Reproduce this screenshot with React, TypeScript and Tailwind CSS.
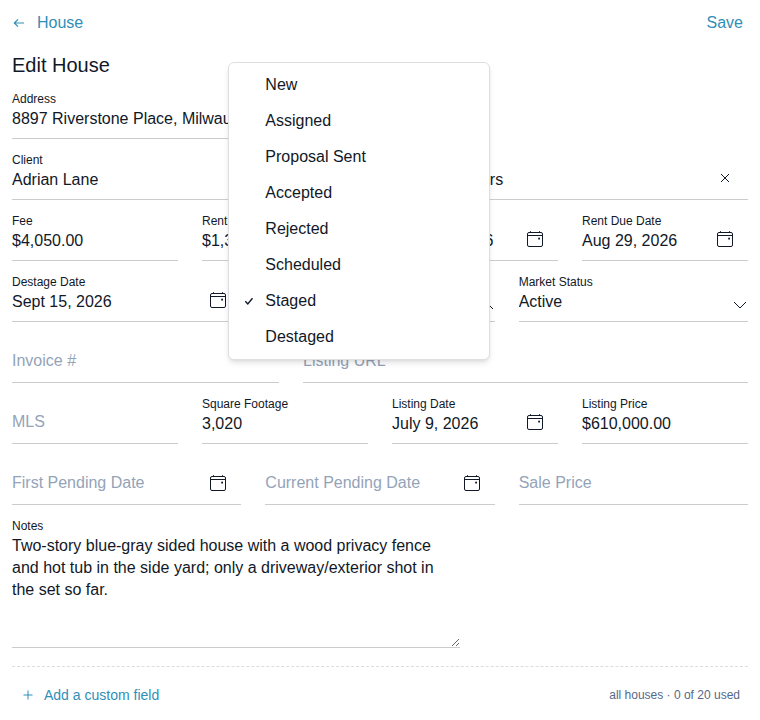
import { useState, type ReactNode } from "react";
import clsx from "clsx";

const STATUSES = [
  "New",
  "Assigned",
  "Proposal Sent",
  "Accepted",
  "Rejected",
  "Scheduled",
  "Staged",
  "Destaged",
];

const CalendarIcon = () => (
  <svg width="18" height="18" viewBox="0 0 18 18" fill="none" stroke="currentColor" aria-hidden="true">
    <rect x="1.5" y="2.5" width="15" height="14" rx="1.5" />
    <path d="M1.5 5.5h15M4.5 1.2v1.3M13.5 1.2v1.3" />
    <rect x="12.2" y="7.7" width="1.8" height="1.8" fill="currentColor" stroke="none" />
  </svg>
);

const ClearIcon = () => (
  <svg width="18" height="18" viewBox="0 0 18 18" fill="none" stroke="currentColor" aria-hidden="true">
    <path d="M5 5l8 8M13 5l-8 8" />
  </svg>
);

const ChevronIcon = ({ className }: { className?: string }) => (
  <svg
    width="14"
    height="8"
    viewBox="0 0 14 8"
    fill="none"
    stroke="currentColor"
    className={className}
    aria-hidden="true"
  >
    <path d="M1 1l6 6 6-6" />
  </svg>
);

const CheckIcon = () => (
  <svg width="10" height="10" viewBox="0 0 10 10" fill="none" stroke="currentColor" strokeWidth="1.4" aria-hidden="true">
    <path d="M1.3 5.3L3.8 8l4.7-5.8" />
  </svg>
);

interface FieldProps {
  id: string;
  label: string;
  value?: string;
  action?: { label: string; icon: ReactNode };
  className?: string;
}

const Field = ({ id, label, value, action, className }: FieldProps) => (
  <div className={clsx("relative h-[49px] min-w-0 border-b border-[#cccccc]", className)}>
    {value && (
      <label htmlFor={id} className="block text-xs leading-[18px]">
        {label}
      </label>
    )}
    <input
      id={id}
      type="text"
      defaultValue={value}
      placeholder={value ? undefined : label}
      aria-label={value ? undefined : label}
      className={clsx(
        "block w-full bg-transparent outline-none placeholder:text-[#94a3b8]",
        value ? "h-[22px]" : "h-12 pt-1.5",
        action && "pr-10",
      )}
    />
    {action && (
      <button type="button" aria-label={action.label} className="absolute right-3.5 bottom-3">
        {action.icon}
      </button>
    )}
  </div>
);

const DateField = (props: Omit<FieldProps, "action">) => (
  <Field {...props} action={{ label: `Choose ${props.label}`, icon: <CalendarIcon /> }} />
);

const StatusField = () => {
  const [status, setStatus] = useState("Staged");
  const [open, setOpen] = useState(true);

  return (
    <div className="relative h-[49px] min-w-0 border-b border-[#cccccc]">
      <label htmlFor="status" className="block text-xs leading-[18px]">
        Status
      </label>
      <button
        id="status"
        type="button"
        aria-haspopup="listbox"
        aria-expanded={open}
        onClick={() => setOpen(!open)}
        className="flex h-[22px] w-full items-center justify-between pr-px"
      >
        {status}
        <ChevronIcon className={clsx("mt-2", open && "rotate-180")} />
      </button>
      {open && (
        <div
          role="listbox"
          aria-label="Status"
          className="absolute -bottom-[39px] -left-[37px] z-10 w-[262px] rounded-md border border-[#dedfe2] bg-white p-1 shadow-md"
        >
          {STATUSES.map((name) => (
            <button
              key={name}
              type="button"
              role="option"
              aria-selected={name === status}
              onClick={() => {
                setStatus(name);
                setOpen(false);
              }}
              className="flex h-9 w-full items-center rounded-sm text-left hover:bg-slate-100"
            >
              <span className="flex w-8 justify-center">{name === status && <CheckIcon />}</span>
              {name}
            </button>
          ))}
        </div>
      )}
    </div>
  );
};

export default function App() {
  return (
    <main className="min-h-screen bg-white px-3 pt-3 font-['Liberation_Sans',Arial,sans-serif] text-base text-[#111827]">
      <header className="flex h-[22px] items-center justify-between text-[#2f8fb8]">
        <a href="#house" className="flex items-center gap-3">
          <svg width="13" height="10" viewBox="0 0 13 10" fill="none" stroke="currentColor" strokeWidth="1.2" aria-hidden="true">
            <path d="M12 5H2.5M6 1.3L2.3 5 6 8.7" />
          </svg>
          House
        </a>
        <button type="button" className="mr-[5px]">
          Save
        </button>
      </header>

      <h1 className="mt-4 text-xl leading-[30px]">Edit House</h1>

      <form className="mt-2.5 flex flex-col gap-3">
        <Field id="address" label="Address" value="8897 Riverstone Place, Milwaukee, WI" className="w-full max-w-md" />

        <div className="grid grid-cols-2 gap-6">
          <Field id="client" label="Client" value="Adrian Lane" />
          <Field
            id="agency"
            label="Agency"
            value="Rivera Partners"
            action={{ label: "Clear agency", icon: <ClearIcon /> }}
          />
        </div>

        <div className="grid grid-cols-4 gap-6">
          <Field id="fee" label="Fee" value="$4,050.00" />
          <Field id="rent" label="Rent" value="$1,350.00" />
          <DateField id="stage-date" label="Stage Date" value="June 29, 2026" />
          <DateField id="rent-due" label="Rent Due Date" value="Aug 29, 2026" />
        </div>

        <div className="grid grid-cols-3 gap-6">
          <DateField id="destage-date" label="Destage Date" value="Sept 15, 2026" />
          <StatusField />
          <div className="relative h-[49px] min-w-0 border-b border-[#cccccc]">
            <label htmlFor="market-status" className="block text-xs leading-[18px]">
              Market Status
            </label>
            <select
              id="market-status"
              defaultValue="Active"
              className="block h-[22px] w-full appearance-none bg-transparent leading-[22px] outline-none"
            >
              <option>Active</option>
              <option>Pending</option>
              <option>Sold</option>
            </select>
            <ChevronIcon className="pointer-events-none absolute right-px bottom-3" />
          </div>
        </div>

        <div className="grid grid-cols-[3fr_5fr] gap-6">
          <Field id="invoice" label="Invoice #" />
          <Field id="listing-url" label="Listing URL" />
        </div>

        <div className="grid grid-cols-4 gap-6">
          <Field id="mls" label="MLS" />
          <Field id="sqft" label="Square Footage" value="3,020" />
          <DateField id="listing-date" label="Listing Date" value="July 9, 2026" />
          <Field id="listing-price" label="Listing Price" value="$610,000.00" />
        </div>

        <div className="grid grid-cols-3 gap-6">
          <DateField id="first-pending" label="First Pending Date" />
          <DateField id="current-pending" label="Current Pending Date" />
          <Field id="sale-price" label="Sale Price" />
        </div>

        <div className="w-full max-w-md">
          <label htmlFor="notes" className="block text-xs leading-[18px]">
            Notes
          </label>
          <textarea
            id="notes"
            rows={5}
            defaultValue="Two-story blue-gray sided house with a wood privacy fence and hot tub in the side yard; only a driveway/exterior shot in the set so far."
            className="block w-full resize-y border-b border-[#cccccc] bg-transparent pr-4 pb-0.5 leading-[22px] outline-none"
          />
        </div>
      </form>

      <footer className="mt-[18px] flex items-center justify-between border-t border-dashed border-[#dddddd] px-2 pt-[18px]">
        <button type="button" className="flex items-center gap-2 pl-0.5 text-sm text-[#2f8fb8]">
          <svg width="12" height="12" viewBox="0 0 12 12" fill="none" stroke="currentColor" aria-hidden="true">
            <path d="M6 1.5v9M1.5 6h9" />
          </svg>
          <span className="pl-0.5">Add a custom field</span>
        </button>
        <p className="text-xs text-[#56688a]">all houses · 0 of 20 used</p>
      </footer>
    </main>
  );
}
